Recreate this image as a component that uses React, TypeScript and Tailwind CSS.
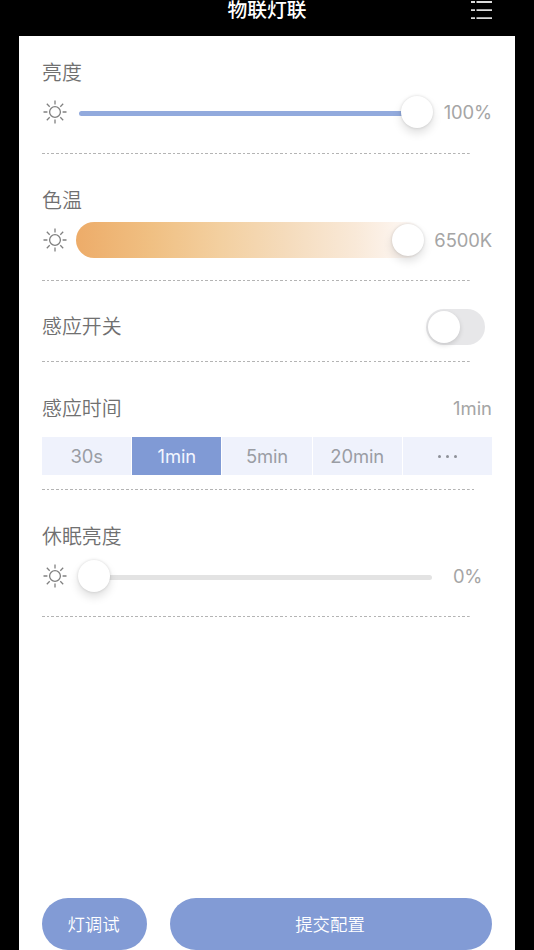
import type { ReactNode } from 'react';

function SunIcon() {
  return (
    <svg
      className="ml-px h-6 w-6 shrink-0"
      viewBox="0 0 24 24"
      fill="none"
      stroke="#808080"
      strokeWidth="1.3"
    >
      <circle cx="12" cy="12" r="5.4" />
      <path d="M12 .5v3.9M12 19.6v3.9M.5 12h3.9M19.6 12h3.9M3.8 3.8l2.9 2.9M17.3 17.3l2.9 2.9M3.8 20.2l2.9-2.9M17.3 6.7l2.9-2.9" />
    </svg>
  );
}

function ListIcon() {
  return (
    <svg className="h-5 w-[21px]" viewBox="0 0 21 20" stroke="#dcdcdc" strokeWidth="1.8">
      <path d="M0 2h4M5.5 2H21M0 10.2h4M5.5 10.2H21M0 18.2h4M5.5 18.2H21" />
    </svg>
  );
}

function Thumb() {
  return (
    <span className="z-10 block h-8 w-8 shrink-0 rounded-full bg-white shadow-[0_5px_10px_rgba(0,0,0,0.13),0_0_3px_rgba(0,0,0,0.14)]" />
  );
}

function Divider({ wide = false }: { wide?: boolean }) {
  return (
    <div
      className={`${wide ? 'w-[434px]' : 'w-[429px]'} mt-auto h-px shrink-0 bg-[repeating-linear-gradient(90deg,#b4b4b4_0,#b4b4b4_2.5px,#fff_2.6px,#fff_4.67px)]`}
    />
  );
}

function Title({ children }: { children: ReactNode }) {
  return <h2 className="text-[19.9px] leading-[27px] font-[350] text-[#707070]">{children}</h2>;
}

function Value({ children }: { children: ReactNode }) {
  return <span className="text-[18.4px] leading-6 font-normal text-[#a5a5a5]">{children}</span>;
}

const times = ['30s', '1min', '5min', '20min', 'more'];

export default function App() {
  return (
    <div className="h-[950px] w-[534px] overflow-hidden bg-black px-[19px] font-['Inter','Noto_Sans_CJK_SC',sans-serif]">
      <header className="grid h-9 grid-cols-[1fr_auto_1fr] items-start px-[23px]">
        <h1 className="col-start-2 text-[19.8px] leading-[21px] font-medium text-white">物联灯联</h1>
        <div className="justify-self-end">
          <ListIcon />
        </div>
      </header>

      <main className="flex h-[914px] flex-col bg-white px-[23px]">
        <section className="flex h-[118px] flex-col pt-6">
          <Title>亮度</Title>
          <div className="mt-[9px] flex h-8 items-center">
            <SunIcon />
            <div className="ml-3 flex items-center">
              <span className="-mr-1 mt-0.5 h-[5px] w-[326px] rounded-full bg-[#92aadd]" />
              <Thumb />
            </div>
            <div className="ml-auto pt-px tracking-[-0.1px]">
              <Value>100%</Value>
            </div>
          </div>
          <Divider />
        </section>

        <section className="flex h-[127px] flex-col pt-[34px]">
          <Title>色温</Title>
          <div className="mt-[7.4px] flex h-9 items-center">
            <SunIcon />
            <div className="ml-[9px] flex h-9 w-[349px] items-center justify-end rounded-full bg-[linear-gradient(90deg,#edac69_0%,#f0c083_22%,#f3d0a1_42%,#f5dcbd_61%,#f9e9d8_80%,#fdf6f1_94%,#fff_99%)] pr-px">
              <Thumb />
            </div>
            <div className="ml-auto tracking-[-0.1px]">
              <Value>6500K</Value>
            </div>
          </div>
          <Divider />
        </section>

        <section className="flex h-[81px] flex-col pt-7">
          <div className="flex h-9 items-center justify-between pr-[7px]">
            <div className="pt-px">
              <Title>感应开关</Title>
            </div>
            <span className="flex h-9 w-[59px] items-center rounded-full bg-[#e7e7e9] pl-0.5">
              <span className="h-8 w-8 rounded-full bg-white shadow-[0_2px_5px_rgba(0,0,0,0.14)]" />
            </span>
          </div>
          <Divider />
        </section>

        <section className="flex h-[128px] flex-col pt-[34px]">
          <div className="flex h-[27px] items-start justify-between">
            <Title>感应时间</Title>
            <Value>1min</Value>
          </div>
          <div className="mt-3.5 grid h-[38px] grid-cols-5 gap-px">
            {times.map((time) => (
              <span
                key={time}
                className={`flex items-center justify-center gap-[5px] pt-px text-[18.4px] font-normal tracking-[-0.1px] ${
                  time === '1min' ? 'bg-[#809ad5] text-[#f3f6ff]' : 'bg-[#eff2fc] text-[#9a9da4]'
                }`}
              >
                {time === 'more'
                  ? [0, 1, 2].map((dot) => (
                      <i key={dot} className="h-[3px] w-[3px] rounded-full bg-[#8d9098]" />
                    ))
                  : time}
              </span>
            ))}
          </div>
          <Divider wide />
        </section>

        <section className="flex h-[127px] flex-col pt-[34px]">
          <Title>休眠亮度</Title>
          <div className="mt-[9px] flex h-8 items-center">
            <SunIcon />
            <div className="ml-[11px] flex items-center">
              <Thumb />
              <span className="-ml-1 mt-0.5 h-[5px] w-[326px] rounded-full bg-[#e3e3e3]" />
            </div>
            <div className="mr-2.5 ml-auto tracking-[-0.3px]">
              <Value>0%</Value>
            </div>
          </div>
          <Divider />
        </section>

        <footer className="mt-auto flex gap-[23px] text-[17.4px] font-[350] text-white">
          <button className="h-[52.5px] w-[105px] rounded-full bg-[#829bd5] pt-0.5 pr-0.5">灯调试</button>
          <button className="h-[52.5px] flex-1 rounded-full bg-[#829bd5] pt-0.5 pr-0.5">提交配置</button>
        </footer>
      </main>
    </div>
  );
}
